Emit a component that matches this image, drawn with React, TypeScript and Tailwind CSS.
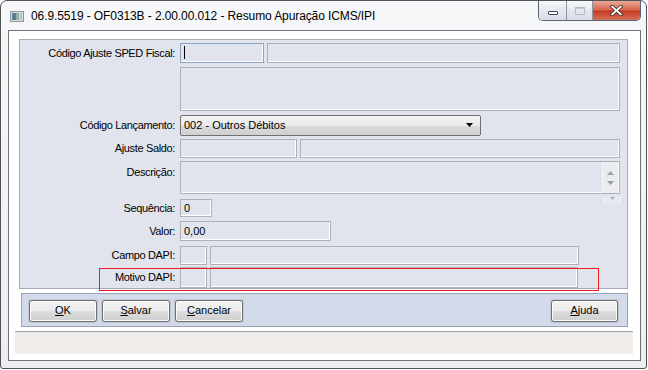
import React from "react";

const font = { fontFamily: '"Liberation Sans", Arial, sans-serif' };

function Field({ w, h = "h-full", focused, children }: { w: string; h?: string; focused?: boolean; children?: React.ReactNode }) {
  return (
    <div
      className={`${w} ${h} shrink-0 flex items-center pl-[3px] text-[11px] text-black bg-[#e1e4ec] border ${
        focused ? "border-[#8ba4c4]" : "border-[#aeb0b5]"
      } shadow-[inset_-1px_-1px_0_#ffffff]`}
    >
      {children}
    </div>
  );
}

function Row({ label, mt, h, top, children }: { label: string; mt: string; h: string; top?: boolean; children?: React.ReactNode }) {
  return (
    <div className={`flex ${mt} ${h}`}>
      <div
        className={`w-[157px] shrink-0 flex justify-end pr-[2px] text-[11px] tracking-[-0.35px] text-black ${
          top ? "items-start pt-[3px]" : "items-center"
        }`}
      >
        {label}
      </div>
      <div className="ml-[3px] flex gap-[3px] h-full">{children}</div>
    </div>
  );
}

function WinButton({ children, w }: { children: React.ReactNode; w: string }) {
  return (
    <div className="p-[1px] bg-[#c3c8d1] rounded-[2px]">
      <div
        className={`${w} h-[22px] flex items-center justify-center rounded-[3px] border border-[#707070] text-[11px] text-black bg-[linear-gradient(#f3f3f3_0%,#ebebeb_48%,#dddddd_52%,#cfcfcf_100%)] shadow-[inset_0_0_0_1px_#fbfbfb]`}
      >
        {children}
      </div>
    </div>
  );
}

export default function App() {
  return (
    <div className="w-[648px] h-[370px] bg-white" style={font}>
      <div className="w-[647px] h-[369px] border border-[#4f5257] rounded-t-[7px] rounded-b-[3px] bg-[linear-gradient(#f6f7f9,#eceef1)] flex flex-col">
        {/* title bar */}
        <div className="h-[29px] flex shrink-0">
          <div className="flex items-center pl-[9px] pt-[1px]">
            <svg width="14" height="11" viewBox="0 0 14 11">
              <rect x="0.5" y="0.5" width="13" height="10" fill="#d9dde2" stroke="#8e969f" />
              <rect x="2" y="2" width="4" height="7" fill="#5d7f8c" />
              <rect x="6" y="2" width="3" height="7" fill="#8fb0a8" />
              <rect x="10" y="2" width="2" height="7" fill="#b9c0c8" />
            </svg>
            <span className="ml-[7px] text-[12px] text-black tracking-[-0.1px]">
              06.9.5519 - OF0313B - 2.00.00.012 - Resumo Apuração ICMS/IPI
            </span>
          </div>
          <div className="ml-auto mr-[5px] flex self-start h-[20px] border border-t-0 border-[#5b6473] rounded-b-[5px] overflow-hidden">
            <div className="w-[28px] flex items-center justify-center border-r border-[#8d95a2] bg-[linear-gradient(#f7f8fa,#e4e8ee_50%,#d8dde5)]">
              <div className="mt-[5px] w-[10px] h-[4px] bg-white border border-[#434a55] rounded-[1px]" />
            </div>
            <div className="w-[26px] flex items-center justify-center border-r border-[#8d95a2] bg-[linear-gradient(#f7f8fa,#e4e8ee_50%,#d8dde5)]">
              <div className="w-[10px] h-[8px] border border-[#b7bcc4] shadow-[inset_0_1px_0_#c8ccd2]" />
            </div>
            <div className="w-[47px] flex items-center justify-center bg-[linear-gradient(#eaa898,#d9674f_45%,#c43c22_55%,#d5705c)]">
              <svg width="13" height="11" viewBox="0 0 13 11">
                <path d="M2 1.5 L11 9.5 M11 1.5 L2 9.5" stroke="#3a2a28" strokeWidth="3.6" strokeLinecap="round" />
                <path d="M2 1.5 L11 9.5 M11 1.5 L2 9.5" stroke="#ffffff" strokeWidth="1.8" strokeLinecap="round" />
              </svg>
            </div>
          </div>
        </div>

        {/* client area */}
        <div className="ml-[7px] mr-[5px] mb-[7px] flex-1 border border-[#6e7176] bg-white flex flex-col">
          <div className="relative ml-[10px] mt-[8px] w-[609px] h-[250px] shrink-0 border border-[#a4abb6] bg-[#e1e4ec] flex flex-col">
            <Row label="Código Ajuste SPED Fiscal:" mt="mt-[3px]" h="h-[20px]">
              <Field w="w-[84px]" focused>
                <div className="w-[1px] h-[13px] bg-black" />
              </Field>
              <Field w="w-[353px]" />
            </Row>
            <Row label="" mt="mt-[4px]" h="h-[45px]">
              <Field w="w-[440px]" />
            </Row>
            <div className="flex mt-[4px] h-[21px]">
              <div className="w-[157px] shrink-0 flex justify-end items-center pr-[2px] text-[11px] tracking-[-0.35px]">
                Código Lançamento:
              </div>
              <div className="ml-[3px] w-[301px] h-full flex items-center pl-[3px] pr-[7px] border border-[#707070] rounded-[2px] text-[11px] bg-[linear-gradient(#f4f4f4,#e9e9e9_50%,#dbdbdb_51%,#d0d0d0)]">
                <span>002 - Outros Débitos</span>
                <svg className="ml-auto" width="7" height="4" viewBox="0 0 7 4">
                  <path d="M0 0 H7 L3.5 4 Z" fill="#000" />
                </svg>
              </div>
            </div>
            <Row label="Ajuste Saldo:" mt="mt-[3px]" h="h-[20px]">
              <Field w="w-[117px]" />
              <Field w="w-[320px]" />
            </Row>
            <Row label="Descrição:" mt="mt-[3px]" h="h-[33px]" top>
              <div className="w-[440px] h-full flex bg-[#e1e4ec] border border-[#aeb0b5] shadow-[inset_-1px_-1px_0_#ffffff]">
                <div className="ml-auto mr-[1px] w-[16px] h-full flex flex-col items-center justify-center gap-[6px] bg-[#eaecf0] border-l border-[#f5f6f8]">
                  <svg width="7" height="4" viewBox="0 0 7 4">
                    <path d="M0 4 H7 L3.5 0 Z" fill="#9a9ea6" />
                  </svg>
                  <svg width="7" height="4" viewBox="0 0 7 4">
                    <path d="M0 0 H7 L3.5 4 Z" fill="#9a9ea6" />
                  </svg>
                </div>
              </div>
            </Row>
            <div className="flex">
              <div className="flex-1">
                <Row label="Sequência:" mt="mt-[5px]" h="h-[18px]">
                  <Field w="w-[32px]">0</Field>
                </Row>
              </div>
              <div className="mr-[6px] mt-[3px] w-[18px] h-[6px] flex justify-center bg-[#e8eaef] border-x border-[#f3f4f7]">
                <svg width="5" height="3" viewBox="0 0 5 3">
                  <path d="M0 0 H5 L2.5 3 Z" fill="#a8acb3" />
                </svg>
              </div>
            </div>
            <Row label="Valor:" mt="mt-[4px]" h="h-[20px]">
              <Field w="w-[151px]">0,00</Field>
            </Row>
            <Row label="Campo DAPI:" mt="mt-[5px]" h="h-[20px]">
              <Field w="w-[27px]" />
              <Field w="w-[369px]" />
            </Row>
            <div className="flex mt-[2px] h-[21px]">
              <div className="ml-[92px] w-[65px] shrink-0 flex justify-end items-center pr-[2px] text-[11px] tracking-[-0.35px] bg-[#e1e4ec]">
                Motivo DAPI:
              </div>
              <div className="ml-[3px] flex gap-[3px] h-full">
                <Field w="w-[27px]" />
                <Field w="w-[368px]" />
              </div>
            </div>
            <div className="absolute left-[79px] top-[228px] w-[500px] h-[23px] border border-[#ec1c24]" />
          </div>

          {/* button bar */}
          <div className="ml-[12px] mt-[4px] w-[607px] h-[34px] shrink-0 border border-[#9aa3b2] bg-[#d3dbea] flex items-center pl-[6px] pr-[8px] pt-[1px]">
            <div className="flex gap-[3px]">
              <WinButton w="w-[68px]">
                <span><u>O</u>K</span>
              </WinButton>
              <WinButton w="w-[68px]">
                <span><u>S</u>alvar</span>
              </WinButton>
              <WinButton w="w-[68px]">
                <span><u>C</u>ancelar</span>
              </WinButton>
            </div>
            <div className="ml-auto">
              <WinButton w="w-[67px]">
                <span><u>A</u>juda</span>
              </WinButton>
            </div>
          </div>

          {/* status area */}
          <div className="ml-[6px] mt-[4px] w-[618px] h-[23px] shrink-0 border-t border-[#a3a3a3] bg-[#efecea]" />
        </div>
      </div>
    </div>
  );
}
